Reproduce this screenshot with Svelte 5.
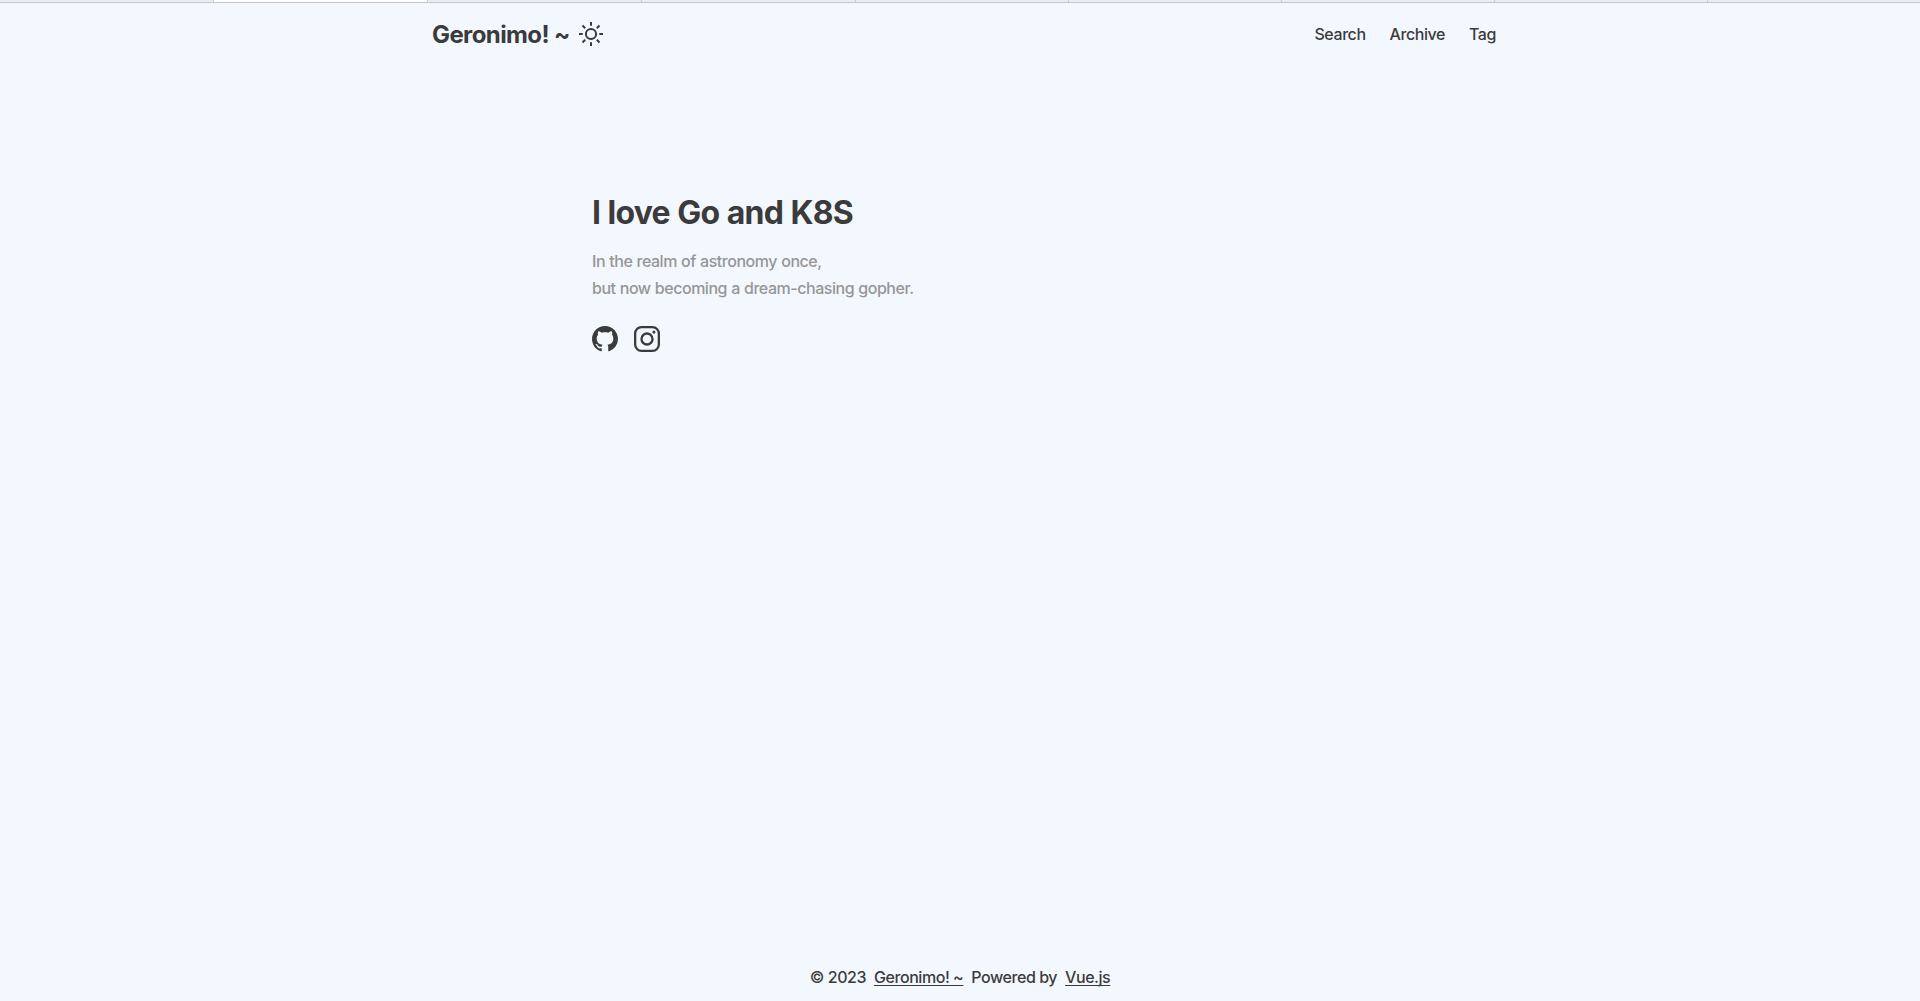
<script>
  const tabs = Array.from({ length: 9 }, (_, i) => i);
  const links = ['Search', 'Archive', 'Tag'];
</script>

<div class="page">
  <div class="tabs">
    {#each tabs as t}
      <span class:active={t === 1}></span>
    {/each}
  </div>
  <header>
    <div class="brand">
      <strong>Geronimo! ~</strong>
      <svg class="sun" viewBox="0 0 24 24" fill="none" stroke="currentColor" stroke-width="2">
        <circle cx="12" cy="12" r="5.1" />
        <path d="M12 0v3.7M12 20.3V24M0 12h3.7M20.3 12H24M3.5 3.5l2.7 2.7M17.8 17.8l2.7 2.7M3.5 20.5l2.7-2.7M17.8 6.2l2.7-2.7" />
      </svg>
    </div>
    <nav>
      {#each links as link}
        <span>{link}</span>
      {/each}
    </nav>
  </header>
  <main>
    <h1>I love Go and K8S</h1>
    <p>In the realm of astronomy once,<br />but now becoming a dream-chasing gopher.</p>
    <div class="social">
      <svg viewBox="0 0 16 16" fill="currentColor">
        <path d="M8 0C3.58 0 0 3.58 0 8c0 3.54 2.29 6.53 5.47 7.59.4.07.55-.17.55-.38 0-.19-.01-.82-.01-1.49-2.01.37-2.53-.49-2.69-.94-.09-.23-.48-.94-.82-1.13-.28-.15-.68-.52-.01-.53.63-.01 1.08.58 1.23.82.72 1.21 1.87.87 2.33.66.07-.52.28-.87.51-1.07-1.78-.2-3.64-.89-3.64-3.95 0-.87.31-1.59.82-2.15-.08-.2-.36-1.02.08-2.12 0 0 .67-.21 2.2.82.64-.18 1.32-.27 2-.27s1.36.09 2 .27c1.53-1.04 2.2-.82 2.2-.82.44 1.1.16 1.92.08 2.12.51.56.82 1.27.82 2.15 0 3.07-1.87 3.75-3.65 3.95.29.25.54.73.54 1.48 0 1.07-.01 1.93-.01 2.2 0 .21.15.46.55.38A8.01 8.01 0 0 0 16 8c0-4.42-3.58-8-8-8Z" />
      </svg>
      <svg viewBox="0 0 26 26" fill="none" stroke="currentColor" stroke-width="2.3">
        <rect x="1.15" y="1.15" width="23.7" height="23.7" rx="6.3" />
        <circle cx="13" cy="13" r="5.5" />
        <circle cx="19.9" cy="6.1" r="1.55" fill="currentColor" stroke="none" />
      </svg>
    </div>
  </main>
  <footer>
    <span>© 2023</span>
    <span class="link">Geronimo! ~</span>
    <span>Powered by</span>
    <span class="link">Vue.js</span>
  </footer>
</div>

<style>
  :global(body) {
    background: #f3f8ff;
  }
  .page {
    height: 1001px;
    display: flex;
    flex-direction: column;
    overflow: hidden;
    background: #f3f8ff;
    color: #3b3b3b;
    font: 500 16px/27px Inter, sans-serif;
  }
  .tabs {
    box-sizing: border-box;
    height: 3px;
    flex: none;
    display: grid;
    grid-template-columns: repeat(4, 214px) repeat(4, 213px) 1fr;
    border-bottom: 1px solid #c4c8ce;
    background: #e9edef;
  }
  .tabs span {
    border-right: 1px solid #c9cdd1;
  }
  .tabs span.active {
    background: #fff;
  }
  .tabs span:last-child {
    border-right: 0;
  }
  header {
    box-sizing: border-box;
    width: 1064px;
    height: 62px;
    margin-left: 432px;
    flex: none;
    display: flex;
    align-items: center;
    justify-content: space-between;
  }
  .brand {
    display: flex;
    align-items: center;
    gap: 9px;
  }
  strong {
    font-size: 24px;
    font-weight: 700;
    letter-spacing: -0.6px;
  }
  .sun {
    width: 24px;
    height: 24px;
  }
  nav {
    display: flex;
    gap: 24px;
    letter-spacing: -0.43px;
  }
  main {
    flex: 1;
    padding: 127px 0 0 592px;
  }
  h1 {
    margin: 0;
    font-size: 32px;
    line-height: 42px;
    font-weight: 700;
    letter-spacing: -0.78px;
    word-spacing: 0.6px;
  }
  p {
    margin: 14px 0 0;
    color: #969696;
    letter-spacing: -0.47px;
    word-spacing: 0.4px;
  }
  .social {
    display: flex;
    gap: 16px;
    margin-top: 24px;
  }
  .social svg {
    width: 26px;
    height: 26px;
  }
  footer {
    display: flex;
    justify-content: center;
    gap: 8px;
    padding-bottom: 10px;
    letter-spacing: -0.45px;
  }
  .link {
    text-decoration: underline;
    text-decoration-thickness: 1px;
    text-underline-offset: 2px;
    text-decoration-skip-ink: none;
  }
</style>
